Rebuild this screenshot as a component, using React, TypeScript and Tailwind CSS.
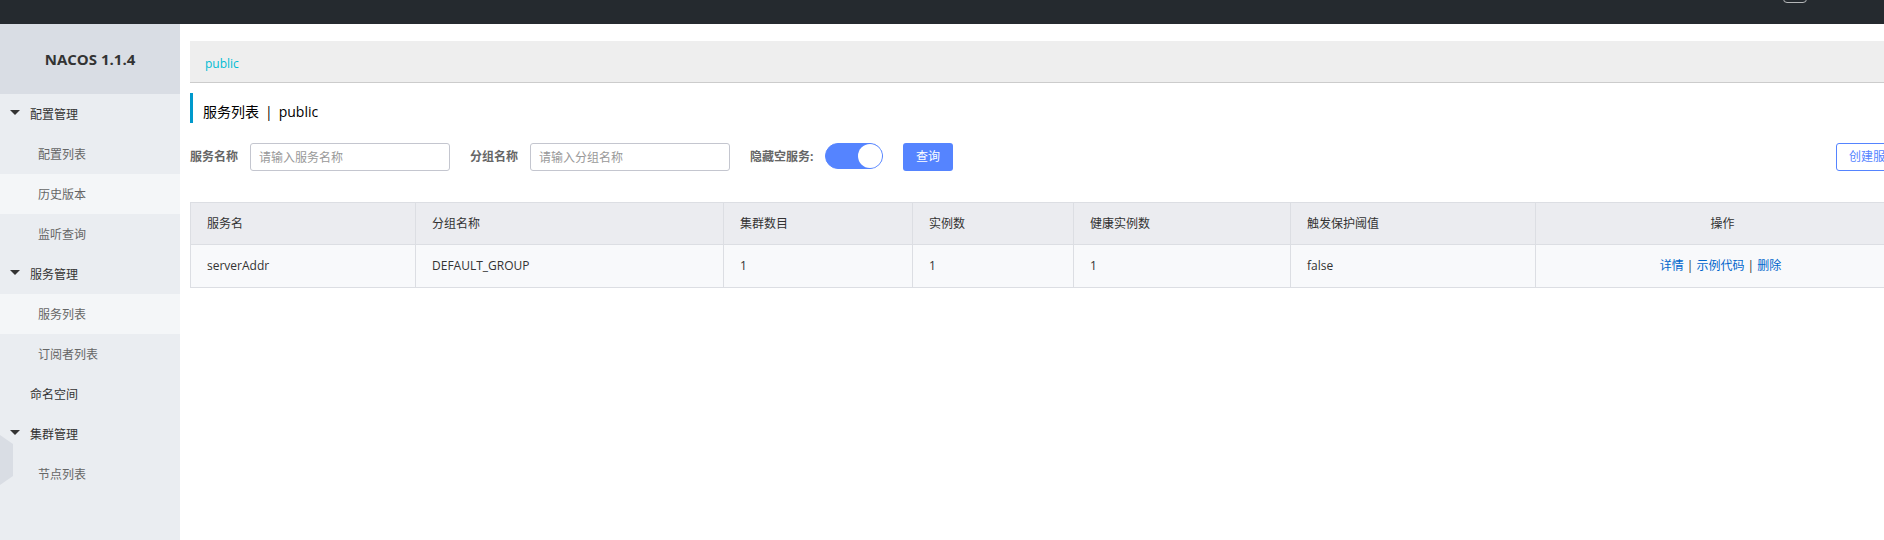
import { useState } from "react";

type NavItem = { label: string; highlighted?: boolean };
type NavGroup = { label: string; leaf?: boolean; items: NavItem[] };

const navGroups: NavGroup[] = [
  {
    label: "配置管理",
    items: [
      { label: "配置列表" },
      { label: "历史版本", highlighted: true },
      { label: "监听查询" },
    ],
  },
  {
    label: "服务管理",
    items: [{ label: "服务列表", highlighted: true }, { label: "订阅者列表" }],
  },
  { label: "命名空间", leaf: true, items: [] },
  { label: "集群管理", items: [{ label: "节点列表" }] },
];

const columns = [
  { title: "服务名", width: "w-[225px]" },
  { title: "分组名称", width: "w-[308px]" },
  { title: "集群数目", width: "w-[189px]" },
  { title: "实例数", width: "w-[161px]" },
  { title: "健康实例数", width: "w-[217px]" },
  { title: "触发保护阈值", width: "w-[245px]" },
];

const services = [["serverAddr", "DEFAULT_GROUP", "1", "1", "1", "false"]];

function TopBar() {
  return (
    <header className="flex h-6 items-start justify-end overflow-hidden bg-[#252a2f] pr-[113px]">
      <button
        type="button"
        aria-label="切换语言"
        className="-mt-[21px] h-6 w-6 rounded-sm border border-[#b4b6b8]"
      />
    </header>
  );
}

function Sidebar() {
  return (
    <aside className="relative w-[180px] shrink-0 bg-[#eaedf1]">
      <h1 className="flex h-[70px] items-center justify-center bg-[#d9dde4] text-[15px] font-bold text-[#333]">
        NACOS 1.1.4
      </h1>
      <nav>
        <ul>
          {navGroups.map((group) => (
            <li key={group.label}>
              <a href="#" className="flex h-10 items-center pt-0.5 pl-[10px] text-[#333]">
                <span className="flex w-5 pb-1.5">
                  {!group.leaf && (
                    <svg width="10" height="5" viewBox="0 0 10 5" fill="#333">
                      <path d="M0 0h10L5 5z" />
                    </svg>
                  )}
                </span>
                {group.label}
              </a>
              <ul>
                {group.items.map((item) => (
                  <li key={item.label}>
                    <a
                      href="#"
                      className={
                        item.highlighted
                          ? "flex h-10 items-center bg-[#f4f6f8] pt-0.5 pl-[38px] text-[#666]"
                          : "flex h-10 items-center pt-0.5 pl-[38px] text-[#666]"
                      }
                    >
                      {item.label}
                    </a>
                  </li>
                ))}
              </ul>
            </li>
          ))}
        </ul>
      </nav>
      <button type="button" aria-label="收起菜单" className="absolute top-[411px] left-0">
        <svg width="13" height="50" viewBox="0 0 13 50" fill="#d9dde4">
          <path d="M0 0l13 9v32L0 50z" />
        </svg>
      </button>
    </aside>
  );
}

function SearchForm() {
  const [hideEmpty, setHideEmpty] = useState(true);
  const inputClass =
    "h-7 w-[200px] rounded-[3px] border border-[#c4c6cf] bg-white px-2 text-[#333] outline-none placeholder:text-[#999]";
  return (
    <form className="mt-5 flex h-7 items-center" onSubmit={(e) => e.preventDefault()}>
      <label htmlFor="service-name" className="w-[60px] font-bold text-[#666]">
        服务名称
      </label>
      <input id="service-name" placeholder="请输入服务名称" className={inputClass} />
      <label htmlFor="group-name" className="ml-5 w-[60px] font-bold text-[#666]">
        分组名称
      </label>
      <input id="group-name" placeholder="请输入分组名称" className={inputClass} />
      <label htmlFor="hide-empty" className="ml-5 w-[75px] font-bold text-[#666]">
        隐藏空服务:
      </label>
      <input
        id="hide-empty"
        type="checkbox"
        role="switch"
        checked={hideEmpty}
        onChange={(e) => setHideEmpty(e.target.checked)}
        className="flex h-[26px] w-[58px] appearance-none self-start rounded-full border border-[#c4c6cf] bg-[#f2f3f7] before:size-6 before:rounded-full before:bg-white checked:justify-end checked:border-[#5584ff] checked:bg-[#5584ff]"
      />
      <button type="submit" className="ml-5 h-7 w-[50px] rounded-[3px] bg-[#5584ff] text-white">
        查询
      </button>
      <button
        type="button"
        className="ml-auto h-7 rounded-[3px] border border-[#5584ff] bg-white px-3 text-[#5584ff]"
      >
        创建服务
      </button>
    </form>
  );
}

function ServiceTable() {
  return (
    <table className="mt-[31px] w-full table-fixed border-separate border-spacing-0 border-r border-b border-[#dcdee3] text-left text-[#333]">
      <thead>
        <tr className="h-[42px] bg-[#ebecf0]">
          {columns.map((column) => (
            <th
              key={column.title}
              className={`${column.width} border-t border-l border-[#dcdee3] px-4 font-normal`}
            >
              {column.title}
            </th>
          ))}
          <th className="border-t border-l border-[#dcdee3] px-4 text-center font-normal">操作</th>
        </tr>
      </thead>
      <tbody>
        {services.map((row) => (
          <tr key={row[0]} className="h-[43px] bg-[#f8f9fb]">
            {row.map((value, index) => (
              <td key={columns[index].title} className="border-t border-l border-[#dcdee3] px-4">
                {value}
              </td>
            ))}
            <td className="border-t border-l border-[#dcdee3] pr-5 pl-4 text-center">
              <a href="#" className="text-[#0066cc]">详情</a>
              {" | "}
              <a href="#" className="text-[#0066cc]">示例代码</a>
              {" | "}
              <a href="#" className="text-[#0066cc]">删除</a>
            </td>
          </tr>
        ))}
      </tbody>
    </table>
  );
}

export default function App() {
  return (
    <div className="overflow-x-hidden bg-white font-['Open_Sans','Noto_Sans_CJK_SC',sans-serif] text-xs">
      <div className="flex min-h-screen min-w-[1920px] flex-col">
        <TopBar />
        <div className="flex grow">
          <Sidebar />
          <main className="grow px-[10px] pt-[17px]">
            <div className="flex h-[42px] items-center border-b border-[#ccc] bg-[#eee] px-[15px] pt-1">
              <a href="#" className="text-[#00bcd4]">public</a>
            </div>
            <h2 className="mt-[10px] flex h-[30px] items-center gap-1.5 border-l-3 border-[#0099cc] pt-2 pl-[10px] text-sm text-black">
              <span>服务列表</span>
              <span>|</span>
              <span>public</span>
            </h2>
            <SearchForm />
            <ServiceTable />
          </main>
        </div>
      </div>
    </div>
  );
}
